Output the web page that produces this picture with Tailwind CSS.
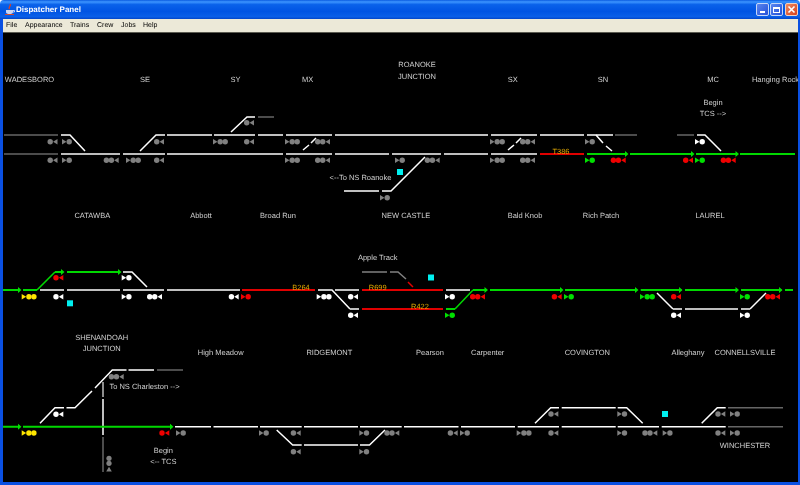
<!DOCTYPE html>
<html>
<head>
<meta charset="utf-8">
<script src="https://cdn.jsdelivr.net/npm/@tailwindcss/browser@4"></script>
<title>Dispatcher Panel</title>
</head>
<body class="bg-white overflow-hidden">
<div class="w-[800px] h-[485px] flex flex-col font-['Liberation_Sans',Arial,sans-serif] [text-rendering:geometricPrecision] rounded-t-[4px] overflow-hidden">
  <div class="h-[19px] flex items-center pl-[5px] pr-[2px] bg-[linear-gradient(180deg,#0a5be0_0%,#3d95ff_10%,#0a62ea_24%,#0054e3_60%,#0a5fe8_88%,#0345c8_100%)]">
    <svg class="w-[10px] h-[11px] mr-[1px]" viewBox="0 0 10 11">
      <path d="M5 0C6.5 2 3 3 4.500 5" fill="none" stroke="#e04020" stroke-width="1.300"/>
      <path d="M1 6H8V8C8 9.500 6.500 10 4.500 10S1 9.500 1 8Z" fill="#c9d6f5"/>
      <path d="M8 6.500H9.500V8H8" fill="none" stroke="#e8eefc" stroke-width=".8"/>
      <path d="M0 10.500H9" stroke="#d04a30" stroke-width="1"/>
    </svg>
    <span class="text-[8px] leading-none font-bold text-white will-change-transform">Dispatcher Panel</span>
    <div class="ml-auto flex gap-[1px] items-center">
      <div class="w-[13px] h-[13px] rounded-[2px] border border-[#c5d6f8] bg-[linear-gradient(135deg,#5a86ee,#2450d8)] flex items-end pl-[3px] pb-[2px]"><div class="w-[5px] h-[2px] bg-white"></div></div>
      <div class="w-[13px] h-[13px] rounded-[2px] border border-[#c5d6f8] bg-[linear-gradient(135deg,#5a86ee,#2450d8)] flex items-center justify-center"><div class="w-[7px] h-[6px] border border-white border-t-2"></div></div>
      <div class="ml-[1px] w-[13px] h-[13px] rounded-[2px] border border-[#f0d0c0] bg-[linear-gradient(135deg,#ee8a62,#d8401c)]">
        <svg viewBox="0 0 11 11" class="w-[11px] h-[11px]"><path d="M2.500 2.500L8.500 8.500M8.500 2.500L2.500 8.500" stroke="#fff" stroke-width="1.600"/></svg>
      </div>
    </div>
  </div>
  <div class="flex-1 flex flex-col border-l-[3px] border-r-[2px] border-b-[3px] border-[#0a50e2] min-h-0">
    <div class="h-[13px] shrink-0 bg-[#ece9d8] flex items-center pl-[3px] gap-[7.500px] text-[7px] leading-none text-black">
      <span class="will-change-transform">File</span><span class="will-change-transform">Appearance</span><span class="will-change-transform">Trains</span><span class="will-change-transform">Crew</span><span class="will-change-transform">Jobs</span><span class="will-change-transform">Help</span>
    </div>
    <div class="flex-1 relative bg-black min-h-0 border-t border-[#5a5a50]">
      <svg class="absolute inset-0 w-full h-full will-change-transform" viewBox="3 33 795 449">
        <defs>
          <g id="r1"><path d="M0-2.800L4.500 0L0 2.800Z"/><circle cx="7.200" r="2.700"/></g>
          <g id="r2"><path d="M0-2.800L4.500 0L0 2.800Z"/><circle cx="7.200" r="2.700"/><circle cx="12.200" r="2.700"/></g>
          <g id="l1"><circle cx="2.700" r="2.700"/><path d="M10-2.800L5.500 0L10 2.800Z"/></g>
          <g id="l2"><circle cx="2.700" r="2.700"/><circle cx="7.700" r="2.700"/><path d="M15-2.800L10.500 0L15 2.800Z"/></g>
        </defs>

        <!-- tracks: white -->
        <g class="fill-none stroke-white" stroke-width="1.500">
          <path d="M61 135H70L85 151"/>
          <path d="M140 151L156 135H165M167 135H212M214 135H255M258 135H283M286 135H332M335 135H488M491 135H537M540 135H584M587 135H613"/>
          <path d="M231 132L247 117H255"/>
          <path d="M303 150L309 145M311 143L316 138M508 150L514 145M516 143L521 138"/>
          <path d="M344 191H379M382 191H391L425 157"/>
          <path d="M596 135L603 143M606 146L612 151"/>
          <path d="M697 135H705L721 151"/>
          <path d="M123 272H132L147 287"/>
          <path d="M40 290H64M67 290H120M123 290H164M167 290H240"/>
          <path d="M318 290H332L350 309M335 290H359M446 290H470"/>
          <path d="M657 293L673 309M766 293L750 309"/>
          <path d="M40 423.300L55 407.700H64M66.500 407.700H75L92 391M95 388L112.300 370H126.500M128.500 370H154"/>
          <path d="M175 426.700H211M213.500 426.700H258M260 426.700H301.700M304 426.700H358M360 426.700H401.700M404 426.700H458.500M461 426.700H515M517.700 426.700H559M561.700 426.700H615.700M617.700 426.700H659M661.700 426.700H725.700"/>
          <path d="M276.700 430L292.700 445H301.700M304 445H358M360 445H369.500L385 430"/>
          <path d="M535 423.300L550.700 407.700H559M561.700 407.700H615.700M617.700 407.700H626.700L642.700 423.300"/>
          <path d="M701.700 423.300L717.300 407.700H725.700"/>
          <path d="M103 399V435"/>
        </g>
        <!-- tracks: light grey -->
        <g class="fill-none stroke-[#bdbdbd]" stroke-width="2">
          <path d="M61 154H120M123 154H165M167 154H283M286 154H332M335 154H389M392 154H441M444 154H488M491 154H537"/>
          <path d="M350 309H359M673 309H682M685 309H738M741 309H750"/>
          <path d="M103 382V397" stroke-width="1.500"/>
        </g>
        <!-- tracks: grey -->
        <g class="fill-none stroke-[#666]" stroke-width="1.500">
          <path d="M4 135H58M4 154H58M258 117H274M615 135H637M677 135H694"/>
          <path d="M157 370H183M728 407.700H783M728 426.700H783"/>
          <path d="M103 437V472"/>
        </g>
        <path class="fill-none stroke-[#808080]" stroke-width="1.500" d="M362 272H387M390 272H398L406 279"/>
        <!-- tracks: red -->
        <g class="fill-none stroke-[#e00000]" stroke-width="2">
          <path d="M540 154H584M242 290H315M362 290H443"/>
          <path d="M362 309H443"/>
          <path d="M408 282L413 287" stroke-width="1.500"/>
        </g>
        <!-- tracks: green -->
        <g class="fill-none stroke-[#00d800]" stroke-width="2">
          <path d="M587 154H627M630 154H693M696 154H738M740 154H795"/>
          <path d="M3 290H20M23 290H37M55 272H63M67 272H120"/>
          <path d="M37 290L55 272M455 309L473 290" stroke-width="1.500"/>
          <path d="M446 309H455M473 290H487M490 290H562M565 290H637M640.700 290H681.500M685 290H738M741 290H781.500M785 290H793"/>
          <path d="M3 426.700H20M23 426.700H172"/>
        </g>
        <g class="fill-[#00e000]">
          <path d="M625 151L628.500 154L625 157ZM691 151L694.500 154L691 157ZM735.500 151L739 154L735.500 157Z"/>
          <path d="M18 287L21.500 290L18 293ZM61 269L64.500 272L61 275ZM118 269L121.500 272L118 275ZM484.500 287L488 290L484.500 293ZM560 287L563.500 290L560 293ZM635 287L638.500 290L635 293ZM679 287L682.500 290L679 293ZM735.500 287L739 290L735.500 293ZM779 287L782.500 290L779 293Z"/>
          <path d="M18 423.700L21.500 426.700L18 429.700ZM170 423.700L173.500 426.700L170 429.700Z"/>
        </g>

        <!-- signals: grey -->
        <g class="fill-[#808080]">
          <use href="#l1" x="47.500" y="141.700"/><use href="#r1" x="62" y="141.700"/><use href="#l1" x="154" y="141.700"/>
          <use href="#r2" x="213" y="141.700"/><use href="#l1" x="244" y="122.700"/><use href="#l1" x="244" y="141.700"/>
          <use href="#l1" x="47.500" y="160.300"/><use href="#r1" x="62" y="160.300"/><use href="#l2" x="103.700" y="160.300"/>
          <use href="#r2" x="126" y="160.300"/><use href="#l1" x="154" y="160.300"/>
          <use href="#r2" x="285" y="141.700"/><use href="#l2" x="315" y="141.700"/><use href="#r2" x="285" y="160.300"/><use href="#l2" x="315" y="160.300"/>
          <use href="#r1" x="395" y="160.300"/><use href="#l2" x="424.700" y="160.300"/><use href="#r1" x="380" y="197.700"/>
          <use href="#r2" x="490" y="141.700"/><use href="#l2" x="520" y="141.700"/><use href="#r2" x="490" y="160.300"/><use href="#l2" x="520" y="160.300"/>
          <use href="#r1" x="585" y="141.700"/>
          <use href="#l2" x="108.700" y="376.700"/><use href="#r1" x="176" y="433"/><use href="#r1" x="259" y="433"/>
          <use href="#l1" x="290.700" y="433"/><use href="#r1" x="359.300" y="433"/><use href="#l2" x="384.300" y="433"/>
          <use href="#l1" x="447.700" y="433"/><use href="#r1" x="460" y="433"/><use href="#r2" x="516.700" y="433"/>
          <use href="#l1" x="290.700" y="451.700"/><use href="#r1" x="359.300" y="451.700"/>
          <use href="#l1" x="548.300" y="414"/><use href="#r1" x="617.300" y="414"/><use href="#l1" x="715.300" y="414"/><use href="#r1" x="730" y="414"/>
          <use href="#l1" x="548.300" y="433"/><use href="#r1" x="617.300" y="433"/><use href="#l2" x="642.300" y="433"/><use href="#r1" x="662.700" y="433"/>
          <use href="#l1" x="715.300" y="433"/><use href="#r1" x="730" y="433"/>
          <circle cx="109" cy="458.300" r="2.600"/><circle cx="109" cy="463.300" r="2.600"/><path d="M106.200 471.500L109 466.800L111.800 471.500Z"/>
        </g>
        <!-- signals: white -->
        <g class="fill-white">
          <use href="#r1" x="695" y="141.700"/>
          <use href="#l1" x="53.300" y="296.700"/><use href="#r1" x="121.700" y="277.700"/><use href="#r1" x="121.700" y="296.700"/><use href="#l2" x="147" y="296.700"/><use href="#l1" x="228.700" y="296.700"/>
          <use href="#r2" x="316.700" y="296.700"/><use href="#l1" x="348" y="296.700"/><use href="#l1" x="348" y="315.300"/><use href="#r1" x="445" y="296.700"/>
          <use href="#l1" x="671" y="315.300"/><use href="#r1" x="740" y="315.300"/>
          <use href="#l1" x="53.300" y="414.300"/>
        </g>
        <!-- signals: red -->
        <g class="fill-[#f00000]">
          <use href="#l2" x="610.700" y="160.300"/><use href="#l1" x="683" y="160.300"/><use href="#l2" x="720.700" y="160.300"/>
          <use href="#l1" x="53.300" y="277.700"/><use href="#r1" x="241" y="296.700"/><use href="#l2" x="470" y="296.700"/>
          <use href="#l1" x="551.700" y="296.700"/><use href="#l1" x="671" y="296.700"/><use href="#l2" x="765" y="296.700"/>
          <use href="#l1" x="159.300" y="433"/>
        </g>
        <!-- signals: green -->
        <g class="fill-[#00e000]">
          <use href="#r1" x="585" y="160.300"/><use href="#r1" x="695" y="160.300"/>
          <use href="#r1" x="445" y="315.300"/><use href="#r1" x="564" y="296.700"/><use href="#r2" x="640" y="296.700"/><use href="#r1" x="740" y="296.700"/>
        </g>
        <!-- signals: yellow -->
        <g class="fill-[#ffe600]">
          <use href="#r2" x="21.700" y="296.700"/><use href="#r2" x="21.700" y="433"/>
        </g>

        <!-- markers -->
        <g class="fill-[#00f0f0]">
          <rect x="397" y="169" width="6" height="6"/><rect x="428" y="274.500" width="6" height="6"/>
          <rect x="67" y="300.300" width="6" height="6"/><rect x="662" y="411" width="6" height="6"/>
        </g>

        <!-- labels -->
        <g class="fill-[#d0d0d0] text-[7.500px]" text-anchor="middle">
          <text x="29.500" y="82">WADESBORO</text><text x="145" y="82">SE</text><text x="235.500" y="82">SY</text><text x="307.700" y="82">MX</text>
          <text x="417" y="67">ROANOKE</text><text x="417" y="79">JUNCTION</text><text x="512.700" y="82">SX</text><text x="603" y="82">SN</text><text x="713" y="82">MC</text>
          <text x="775.500" y="82">Hanging Rock</text><text x="713" y="105">Begin</text><text x="713" y="116">TCS --&gt;</text>
          <text x="360.500" y="180">&lt;--To NS Roanoke</text>
          <text x="92.300" y="218">CATAWBA</text><text x="201" y="218">Abbott</text><text x="278" y="218">Broad Run</text><text x="406" y="218">NEW CASTLE</text>
          <text x="525" y="218">Bald Knob</text><text x="601" y="218">Rich Patch</text><text x="710" y="218">LAUREL</text>
          <text x="377.700" y="260">Apple Track</text>
          <text x="101.700" y="340">SHENANDOAH</text><text x="101.700" y="351">JUNCTION</text><text x="220.700" y="355">High Meadow</text>
          <text x="144.500" y="389">To NS Charleston --&gt;</text>
          <text x="163.300" y="453">Begin</text><text x="163.300" y="464">&lt;-- TCS</text>
          <text x="329.300" y="355">RIDGEMONT</text><text x="430" y="355">Pearson</text><text x="487.700" y="355">Carpenter</text><text x="587.300" y="355">COVINGTON</text>
          <text x="688" y="355">Alleghany</text><text x="745" y="355">CONNELLSVILLE</text><text x="745" y="448">WINCHESTER</text>
        </g>
        <g class="fill-[#e0a800] text-[7.500px]" text-anchor="middle">
          <text x="561" y="154">T386</text><text x="301" y="290">B264</text><text x="377.700" y="290">R699</text><text x="420" y="309">R422</text>
        </g>
      </svg>
    </div>
  </div>
</div>
</body>
</html>
